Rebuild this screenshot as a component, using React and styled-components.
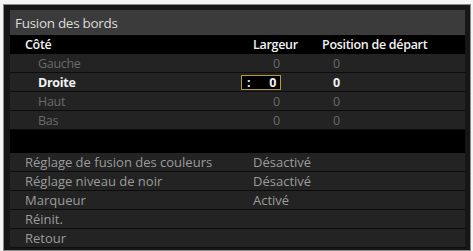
import styled, { createGlobalStyle } from "styled-components";

const GlobalStyle = createGlobalStyle`
  html, body {
    margin: 0;
    padding: 0;
    background: #f4f4f4;
  }
  body {
    font-family: "Open Sans", "Liberation Sans", sans-serif;
  }
`;

const Frame = styled.div`
  box-sizing: border-box;
  width: 468px;
  height: 247px;
  margin: 4px 0 0 3px;
  padding: 5px 5px 2px 6px;
  background: #161616;
  border: 1px solid #8a8a8a;
  display: flex;
  flex-direction: column;
`;

const TitleBar = styled.div`
  height: 25px;
  flex-shrink: 0;
  display: flex;
  align-items: center;
  padding-left: 5px;
  background: #3b3b3b;
  color: #dcdcdc;
  font-size: 13.5px;
  letter-spacing: -0.3px;
`;

const Row = styled.div`
  display: grid;
  grid-template-columns: 231px 75px 1fr;
  align-items: center;
  height: 18px;
  flex-shrink: 0;
  background: ${(p) => (p.$head ? "#000" : "#232323")};
  border-bottom: 1px solid ${(p) => (p.$head ? "#000" : "#0c0c0c")};
  font-size: ${(p) => (p.$large ? "13px" : "12.5px")};
  letter-spacing: ${(p) => (p.$large ? "0" : "-0.3px")};
  color: ${(p) => (p.$bright ? "#f2f2f2" : p.$dim ? "#6a6a6a" : "#9c9c9c")};
  font-weight: ${(p) => (p.$head ? 600 : p.$bright ? 700 : 400)};
`;

const Label = styled.span`
  padding-left: ${(p) => (p.$sub ? 28 : 15)}px;
  white-space: nowrap;
`;

const HeadCell = styled.span`
  padding-left: ${(p) => p.$pad}px;
  white-space: nowrap;
`;

const Value = styled.span`
  padding-left: ${(p) => p.$pad}px;
  white-space: nowrap;
`;

const EditBox = styled.span`
  box-sizing: border-box;
  display: flex;
  align-items: center;
  justify-content: space-between;
  width: 40px;
  height: 15px;
  padding: 0 4px 0 5px;
  border: 1px solid #b49a3c;
  background: #000;
  color: #f2f2f2;
`;

const Gap = styled.div`
  height: 23px;
  flex-shrink: 0;
  background: #000;
`;

const sides = [
  { name: "Gauche", w: "0", p: "0" },
  { name: "Droite", w: "0", p: "0", active: true },
  { name: "Haut", w: "0", p: "0" },
  { name: "Bas", w: "0", p: "0" },
];

const settings = [
  { name: "Réglage de fusion des couleurs", value: "Désactivé" },
  { name: "Réglage niveau de noir", value: "Désactivé" },
  { name: "Marqueur", value: "Activé" },
  { name: "Réinit.", value: "" },
  { name: "Retour", value: "" },
];

export default function App() {
  return (
    <>
      <GlobalStyle />
      <Frame>
        <TitleBar>Fusion des bords</TitleBar>
        <Row $head $bright>
          <Label>Côté</Label>
          <HeadCell $pad={12}>Largeur</HeadCell>
          <HeadCell $pad={6}>Position de départ</HeadCell>
        </Row>
        {sides.map((s) => (
          <Row key={s.name} $bright={s.active} $dim={!s.active}>
            <Label $sub>{s.name}</Label>
            {s.active ? (
              <EditBox>
                <span>:</span>
                <span>{s.w}</span>
              </EditBox>
            ) : (
              <Value $pad={32}>{s.w}</Value>
            )}
            <Value $pad={17}>{s.p}</Value>
          </Row>
        ))}
        <Gap />
        {settings.map((s) => (
          <Row key={s.name} $large>
            <Label>{s.name}</Label>
            <Value $pad={12}>{s.value}</Value>
            <span />
          </Row>
        ))}
      </Frame>
    </>
  );
}
